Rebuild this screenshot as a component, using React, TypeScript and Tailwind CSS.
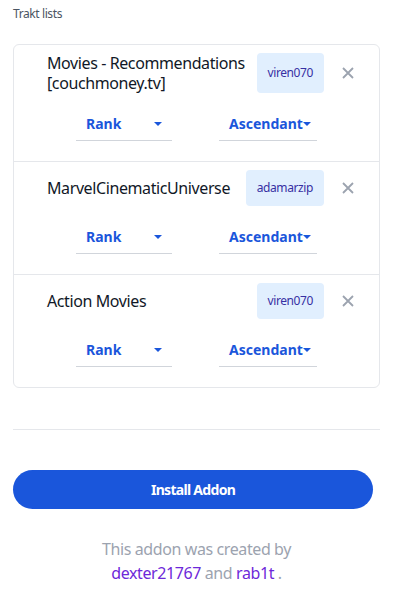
import React from 'react';

interface TraktList {
  name: string;
  user: string;
}

const lists: TraktList[] = [
  { name: 'Movies - Recommendations [couchmoney.tv]', user: 'viren070' },
  { name: 'MarvelCinematicUniverse', user: 'adamarzip' },
  { name: 'Action Movies', user: 'viren070' },
];

const Caret: React.FC = () => (
  <svg width="8" height="4" viewBox="0 0 8 4" className="shrink-0">
    <path d="M0 0h8L4 4z" fill="#1a56db" />
  </svg>
);

const SelectBox: React.FC<{ label: string; width: string }> = ({ label, width }) => (
  <div className={`${width} h-[34px] flex items-center justify-between pl-[10px] pr-[10px] border-b border-[#d1d5db]`}>
    <span className="text-[14px] font-bold tracking-normal text-[#1a56db]">{label}</span>
    <Caret />
  </div>
);

const ListRow: React.FC<{ list: TraktList }> = ({ list }) => (
  <div className="pt-2 pb-5">
    <div className="flex items-stretch pl-[33px] pr-[19px]">
      <div className="flex-1 self-center text-[16px] leading-[20px] text-[#111827] pr-1">{list.name}</div>
      <div className="min-h-[36px] flex items-center px-[11px] rounded bg-[#e1effe] text-[12px] text-[#3730a3]">
        {list.user}
      </div>
      <button className="ml-3 w-6 self-center flex items-center justify-center h-6">
        <svg width="12" height="12" viewBox="0 0 12 12">
          <path d="M1 1l10 10M11 1L1 11" stroke="#9ca3af" strokeWidth="1.8" />
        </svg>
      </button>
    </div>
    <div className="mt-[14px] flex justify-center gap-[47px]">
      <SelectBox label="Rank" width="w-[96px]" />
      <SelectBox label="Ascendant" width="w-[98px]" />
    </div>
  </div>
);

export default function App() {
  return (
    <div className="w-[406px] h-[602px] bg-white px-[13px] pt-[6px] tracking-[-0.025em] font-['Noto_Sans','Open_Sans',sans-serif]">
      <div className="w-[367px]">
        <div className="text-[12px] leading-[16px] text-[#4b5563]">Trakt lists</div>
        <div className="mt-[22px] border border-[#e5e7eb] rounded-md divide-y divide-[#e5e7eb]">
          {lists.map((l, i) => (
            <ListRow key={i} list={l} />
          ))}
        </div>
        <div className="mt-[41px] border-t border-[#e5e7eb]" />
        <button className="mt-[40px] w-[360px] h-[39px] rounded-full bg-[#1a56db] text-white text-[14px] font-bold tracking-[-0.05em]">
          Install Addon
        </button>
        <div className="mt-[28px] text-center text-[16px] leading-[24px] text-[#9ca3af]">
          <div>This addon was created by</div>
          <div>
            <span className="text-[#6d28d9]">dexter21767</span> and <span className="text-[#6d28d9]">rab1t</span> .
          </div>
        </div>
      </div>
    </div>
  );
}
